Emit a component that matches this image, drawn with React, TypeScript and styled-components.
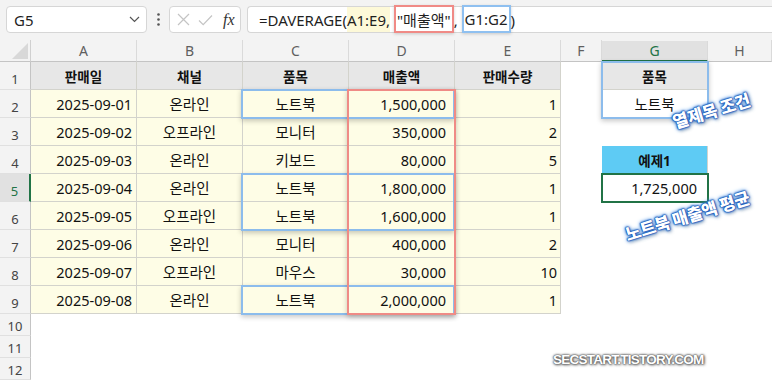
import React from 'react';
import styled, { createGlobalStyle, css } from 'styled-components';

const FONT = `"Noto Sans", "Noto Sans CJK KR", sans-serif`;
const GREEN = '#217346';

const GlobalStyle = createGlobalStyle`
  html, body { margin: 0; padding: 0; background: #fff; }
  body { width: 772px; height: 383px; overflow: hidden; font-family: ${FONT}; }
  * { box-sizing: border-box; }
`;

const Page = styled.div`
  width: 772px;
  height: 383px;
  overflow: hidden;
  display: flex;
  flex-direction: column;
  background: #fff;
`;

/* ---------- formula bar ---------- */
const FormulaBar = styled.div`
  height: 40px;
  flex: none;
  background: #f3f3f3;
  display: flex;
  align-items: flex-start;
  padding: 6px 0 0 6px;
`;

const NameBox = styled.div`
  width: 141px;
  height: 27px;
  background: #fff;
  border: 1px solid #d6d6d6;
  border-radius: 4px;
  display: flex;
  align-items: center;
  justify-content: space-between;
  padding: 0 6px 0 7px;
  font-size: 15px;
  color: #1f1f1f;
`;

const Dots = styled.div`
  width: 22px;
  height: 27px;
  display: flex;
  align-items: center;
  justify-content: center;
`;

const FxBox = styled.div`
  width: 72px;
  height: 27px;
  background: #fff;
  border: 1px solid #d6d6d6;
  border-radius: 4px;
  display: flex;
  align-items: center;
  padding: 0 0 0 7px;
  gap: 8px;
`;

const FxText = styled.span`
  font-family: "Liberation Serif", "DejaVu Serif", serif;
  font-style: italic;
  font-size: 16px;
  color: #333;
  margin-left: 2px;
`;

const FormulaInput = styled.div`
  flex: 1;
  height: 27px;
  margin-left: 6px;
  background: #fff;
  border: 1px solid #d6d6d6;
  border-right: none;
  border-radius: 4px 0 0 4px;
  display: flex;
  align-items: stretch;
  padding-left: 11px;
  font-size: 15px;
  color: #1f1f1f;
  white-space: pre;
`;

const Piece = styled.span<{ $kind?: 'plain' | 'ref' | 'red' | 'blue' }>`
  display: flex;
  align-items: center;
  ${p => p.$kind === 'ref' && css`background: #fdf9d8;`}
  ${p => p.$kind === 'red' && css`
    border: 2px solid #f08a86;
    margin: -2px 0 -1px;
    padding: 0 1px;
    box-shadow: 0 1px 3px rgba(0,0,0,0.18);
  `}
  ${p => p.$kind === 'blue' && css`
    border: 2px solid #8fc0f0;
    margin: -2px 0 -1px;
    padding: 0 1px;
    box-shadow: 0 1px 3px rgba(0,0,0,0.18);
  `}
`;

/* ---------- sheet ---------- */
const Sheet = styled.div`
  position: relative;
  flex: 1;
  font-family: ${FONT};
`;

const HeaderBand = styled.div`
  height: 22px;
  display: flex;
  background: #f3f3f3;
`;

const Corner = styled.div`
  width: 31px;
  flex: none;
  border-right: 1px solid #d0d0d0;
  border-bottom: 1px solid #c4c4c4;
  display: flex;
  align-items: flex-end;
  justify-content: flex-end;
  padding: 0 2px 2px 0;
`;

const ColHead = styled.div<{ $w: number; $active?: boolean }>`
  width: ${p => p.$w}px;
  flex: none;
  display: flex;
  align-items: center;
  justify-content: center;
  font-size: 14px;
  color: #5f5f5f;
  border-right: 1px solid #dadada;
  border-bottom: 1px solid #c4c4c4;
  ${p => p.$active && css`
    background: #e1e1e1;
    color: ${GREEN};
    border-bottom: 2px solid ${GREEN};
    margin-top: 1px;
  `}
`;

const Row = styled.div<{ $h: number }>`
  height: ${p => p.$h}px;
  display: flex;
`;

const RowHead = styled.div<{ $tall: boolean; $active?: boolean }>`
  width: 31px;
  flex: none;
  background: #f3f3f3;
  border-right: 1px solid #c4c4c4;
  border-bottom: 1px solid #e0e0e0;
  display: flex;
  align-items: center;
  justify-content: center;
  padding-top: ${p => (p.$tall ? 7 : 3)}px;
  font-size: 13px;
  color: #444;
  ${p => p.$active && css`
    background: #e1e1e1;
    color: ${GREEN};
    border-right: 2px solid ${GREEN};
  `}
`;

const TailHead = styled.div`
  width: 31px;
  height: 100%;
  background: #f3f3f3;
  border-right: 1px solid #c4c4c4;
`;

const Tail = styled.div`
  flex: 1;
  display: flex;
`;

type Tone = 'none' | 'head' | 'data' | 'white' | 'cyan';
const TONE_BG: Record<Tone, string> = {
  none: '#fff',
  head: '#e7e7e7',
  data: '#fefde6',
  white: '#fff',
  cyan: '#5ecbf4',
};

const Cell = styled.div<{
  $w: number;
  $tone: Tone;
  $align?: 'left' | 'center' | 'right';
  $pr?: number;
  $active?: boolean;
}>`
  width: ${p => p.$w}px;
  flex: none;
  display: flex;
  align-items: center;
  justify-content: ${p => (p.$align === 'right' ? 'flex-end' : p.$align === 'left' ? 'flex-start' : 'center')};
  padding-right: ${p => p.$pr ?? 0}px;
  background: ${p => TONE_BG[p.$tone]};
  font-size: 14.5px;
  color: #111;
  white-space: nowrap;
  ${p => p.$tone !== 'none' && css`
    border-right: 1px solid #d3d3cc;
    border-bottom: 1px solid #d3d3cc;
  `}
  ${p => (p.$tone === 'head' || p.$tone === 'cyan') && css`
    font-weight: 700;
    font-size: 13.5px;
  `}
  ${p => p.$active && css`
    outline: 2px solid ${GREEN};
    outline-offset: -1px;
    position: relative;
  `}
`;

const Filler = styled.div`
  flex: 1;
`;

const Highlight = styled.div<{ $color: string }>`
  position: absolute;
  border: 2px solid ${p => p.$color};
  box-shadow: 0 2px 5px rgba(0, 0, 0, 0.22);
  pointer-events: none;
`;

const Note = styled.div`
  position: absolute;
  transform: translate(-50%, -50%) rotate(-17deg);
  font-family: "Noto Sans CJK KR", sans-serif;
  font-weight: 900;
  font-size: 17px;
  color: #fff;
  white-space: nowrap;
  letter-spacing: -0.4px;
  text-shadow:
    0 0 1px #1652b5, 0 0 1px #1652b5, 0 0 1px #1652b5, 0 0 2px #1652b5, 0 0 2px #1652b5,
    0 0 4px #3d8ae0, 0 0 5px #5fa0e8, 1px 2px 4px rgba(0, 0, 0, 0.35);
`;

const Watermark = styled.div`
  position: absolute;
  left: 553px;
  top: 312px;
  font-family: "Liberation Sans", Arial, sans-serif;
  font-weight: 700;
  font-size: 13.5px;
  letter-spacing: -0.75px;
  color: #fff;
  text-shadow: 0 0 1px #555, 0 0 2px #555, 0 0 3px #666, 1px 1px 3px #777;
`;

const COLS = [
  { k: 'A', w: 106 },
  { k: 'B', w: 106 },
  { k: 'C', w: 106 },
  { k: 'D', w: 106 },
  { k: 'E', w: 106 },
  { k: 'F', w: 41 },
  { k: 'G', w: 106 },
  { k: 'H', w: 64 },
];

const DATA: string[][] = [
  ['2025-09-01', '온라인', '노트북', '1,500,000', '1'],
  ['2025-09-02', '오프라인', '모니터', '350,000', '2'],
  ['2025-09-03', '온라인', '키보드', '80,000', '5'],
  ['2025-09-04', '온라인', '노트북', '1,800,000', '1'],
  ['2025-09-05', '오프라인', '노트북', '1,600,000', '1'],
  ['2025-09-06', '온라인', '모니터', '400,000', '2'],
  ['2025-09-07', '오프라인', '마우스', '30,000', '10'],
  ['2025-09-08', '온라인', '노트북', '2,000,000', '1'],
];

const HEADERS = ['판매일', '채널', '품목', '매출액', '판매수량'];
const ALIGN: ('right' | 'center')[] = ['right', 'center', 'center', 'right', 'right'];
const PAD = [4, 0, 0, 8, 3];

const G_COL: Record<number, { text: string; tone: Tone; align?: 'right' | 'center'; pr?: number; active?: boolean }> = {
  1: { text: '품목', tone: 'head' },
  2: { text: '노트북', tone: 'white' },
  4: { text: '예제1', tone: 'cyan' },
  5: { text: '1,725,000', tone: 'white', align: 'right', pr: 10, active: true },
};

const Chevron = () => (
  <svg width="11" height="7" viewBox="0 0 11 7">
    <path d="M1 1l4.5 4.5L10 1" fill="none" stroke="#555" strokeWidth="1.2" />
  </svg>
);

const VDots = () => (
  <svg width="3" height="13" viewBox="0 0 3 13">
    <circle cx="1.5" cy="1.5" r="1.3" fill="#555" />
    <circle cx="1.5" cy="6.5" r="1.3" fill="#555" />
    <circle cx="1.5" cy="11.5" r="1.3" fill="#555" />
  </svg>
);

const XIcon = () => (
  <svg width="13" height="13" viewBox="0 0 13 13">
    <path d="M1 1l11 11M12 1L1 12" stroke="#c4c4c4" strokeWidth="1.2" fill="none" />
  </svg>
);

const CheckIcon = () => (
  <svg width="15" height="12" viewBox="0 0 15 12">
    <path d="M1 6.5l4.2 4.2L14 1.5" stroke="#c4c4c4" strokeWidth="1.2" fill="none" />
  </svg>
);

const CornerTriangle = () => (
  <svg width="16" height="16" viewBox="0 0 16 16">
    <path d="M16 0V16H0Z" fill="#d8d8d8" />
  </svg>
);

export default function App() {
  const rows = Array.from({ length: 12 }, (_, i) => i + 1);
  return (
    <Page>
      <GlobalStyle />
      <FormulaBar>
        <NameBox>
          <span>G5</span>
          <Chevron />
        </NameBox>
        <Dots>
          <VDots />
        </Dots>
        <FxBox>
          <XIcon />
          <CheckIcon />
          <FxText>fx</FxText>
        </FxBox>
        <FormulaInput>
          <Piece>=DAVERAGE(</Piece>
          <Piece $kind="ref">A1:E9,</Piece>
          <Piece>{'\u00a0'}</Piece>
          <Piece $kind="red">"매출액"</Piece>
          <Piece>{',\u00a0'}</Piece>
          <Piece $kind="blue">G1:G2</Piece>
          <Piece>)</Piece>
        </FormulaInput>
      </FormulaBar>

      <Sheet>
        <HeaderBand>
          <Corner>
            <CornerTriangle />
          </Corner>
          {COLS.map(c => (
            <ColHead key={c.k} $w={c.w} $active={c.k === 'G'}>
              {c.k}
            </ColHead>
          ))}
          <Filler />
        </HeaderBand>

        {rows.map(r => {
          const tall = r <= 9;
          const g = G_COL[r];
          return (
            <Row key={r} $h={tall ? 28 : 22}>
              <RowHead $tall={tall} $active={r === 5}>
                {r}
              </RowHead>
              {COLS.slice(0, 5).map((c, ci) => {
                if (r === 1)
                  return (
                    <Cell key={c.k} $w={c.w} $tone="head">
                      {HEADERS[ci]}
                    </Cell>
                  );
                if (r <= 9)
                  return (
                    <Cell key={c.k} $w={c.w} $tone="data" $align={ALIGN[ci]} $pr={PAD[ci]}>
                      {DATA[r - 2][ci]}
                    </Cell>
                  );
                return <Cell key={c.k} $w={c.w} $tone="none" />;
              })}
              <Cell $w={41} $tone="none" />
              {g ? (
                <Cell $w={106} $tone={g.tone} $align={g.align} $pr={g.pr} $active={g.active}>
                  {g.text}
                </Cell>
              ) : (
                <Cell $w={106} $tone="none" />
              )}
              <Cell $w={64} $tone="none" />
            </Row>
          );
        })}
        <Tail>
          <TailHead />
        </Tail>

        <Highlight $color="#8cbcec" style={{ left: 241, top: 49, width: 214, height: 30 }} />
        <Highlight $color="#8cbcec" style={{ left: 241, top: 133, width: 214, height: 58 }} />
        <Highlight $color="#8cbcec" style={{ left: 241, top: 245, width: 214, height: 30 }} />
        <Highlight $color="#ef8b86" style={{ left: 347, top: 49, width: 109, height: 226 }} />
        <Highlight $color="#8cbcec" style={{ left: 601, top: 21, width: 108, height: 58 }} />

        <Note style={{ left: 711, top: 70 }}>열제목 조건</Note>
        <Note style={{ left: 687, top: 175 }}>노트북 매출액 평균</Note>

        <Watermark>SECSTART.TISTORY.COM</Watermark>
      </Sheet>
    </Page>
  );
}
